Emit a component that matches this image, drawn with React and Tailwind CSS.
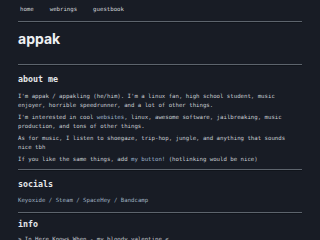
import React from "react";

const mono = { fontFamily: '"DejaVu Sans Mono", monospace' };

function Rule() {
  return <div className="h-[2px] bg-[#5d646d] border-b border-[#10141b]" />;
}

function Heading({ children }) {
  return (
    <h2 className="text-[8.3px] font-bold text-[#e6e8eb] leading-none" style={mono}>
      {children}
    </h2>
  );
}

export default function App() {
  const links = ["Keyoxide", "Steam", "SpaceHey", "Bandcamp"];

  return (
    <div className="w-[320px] h-[240px] overflow-hidden bg-[#181c25] text-[#c9cdd3]" style={mono}>
      <div className="px-[18px]">
        <nav className="flex gap-[16px] pl-[2px] pt-[7px] pb-[8px] text-[5.7px] leading-none text-[#d4d7dc]">
          <a>home</a>
          <a>webrings</a>
          <a>guestbook</a>
        </nav>
        <Rule />

        <h1
          className="pt-[9px] pb-[18px] text-[14px] font-bold leading-none text-[#eef0f2]"
          style={{ fontFamily: "Inter, sans-serif" }}
        >
          appak
        </h1>
        <Rule />

        <section className="pt-[9px] text-[5.7px] leading-[8.5px]">
          <Heading>about me</Heading>
          <p className="mt-[9px]">
            I'm appak / appakling (he/him). I'm a linux fan, high school student, music enjoyer, horrible
            speedrunner, and a lot of other things.
          </p>
          <p className="mt-[4px]">
            I'm interested in cool <a className="text-[#9db4cc]">websites</a>, linux, awesome software,
            jailbreaking, music production, and tons of other things.
          </p>
          <p className="mt-[4px]">
            As for music, I listen to shoegaze, trip-hop, jungle, and anything that sounds nice tbh
          </p>
          <p className="mt-[4px] mb-[5px]">
            If you like the same things, add <a className="text-[#9db4cc]">my button!</a> (hotlinking
            would be nice)
          </p>
        </section>
        <Rule />

        <section className="pt-[9px] pb-[8px] text-[5.7px]">
          <Heading>socials</Heading>
          <div className="mt-[10px] leading-none text-[#9fb0c0]">
            {links.map((l, i) => (
              <span key={l}>
                {i > 0 && " / "}
                <a>{l}</a>
              </span>
            ))}
          </div>
        </section>
        <Rule />

        <section className="pt-[6px] text-[5.7px]">
          <Heading>info</Heading>
          <p className="mt-[9px] leading-none">&gt; In Here Knows When - my bloody valentine &lt;</p>
        </section>
      </div>
    </div>
  );
}
